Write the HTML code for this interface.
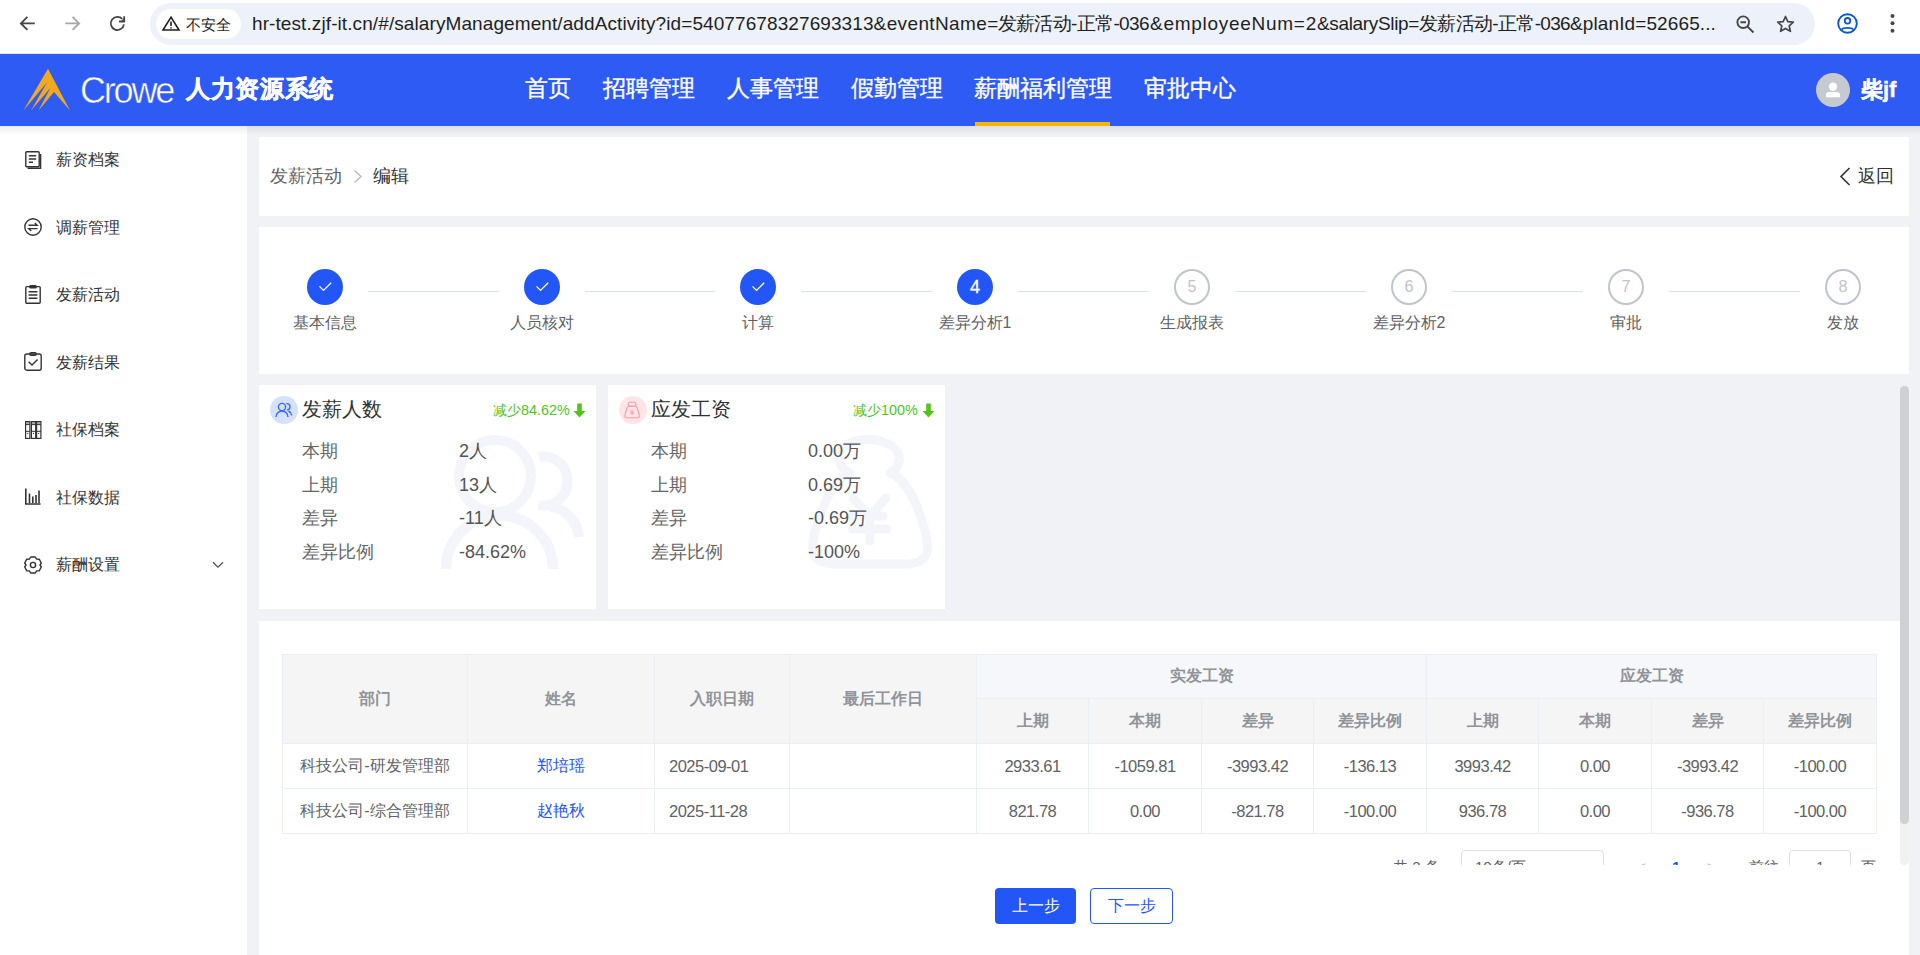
<!DOCTYPE html><html><head><meta charset="utf-8"><style>
*{margin:0;padding:0;box-sizing:border-box}
html,body{width:1920px;height:955px;overflow:hidden;background:#f0f2f5;font-family:"Liberation Sans",sans-serif;position:relative}
.a{position:absolute}
.t{position:absolute;white-space:nowrap;line-height:1}
svg{position:absolute;overflow:visible}
.card{position:absolute;background:#fff}
.nav{color:#fff;font-size:23px;-webkit-text-stroke:0.35px #fff}
.mi{font-size:16px;color:#333}
.step{position:absolute;width:36px;height:36px;border-radius:50%;top:269px}
.done{background:#2356f6}
.todo{border:2px solid #c0c4cc;background:#fff}
.snum{position:absolute;left:0;top:0;width:100%;text-align:center;line-height:32px;font-size:16px;color:#c0c4cc}
.line{position:absolute;top:291px;height:1px;background:#dcdfe6;width:131px}
.slabel{font-size:16px;color:#606266}
.sl{font-size:18px;color:#666}
.sv{font-size:18px;color:#555}
table{position:absolute;border-collapse:collapse;table-layout:fixed;left:282px;top:654px}
td,th{border:1px solid #ebeef5;text-align:center;font-size:16.5px;letter-spacing:-0.5px;color:#606266;font-weight:normal;padding:0;white-space:nowrap}
th{background:#f5f5f5;color:#909399;font-weight:bold;font-size:16px;letter-spacing:0}
td.c{font-size:16px;letter-spacing:0}
th.g{background:#f5f7fa}
a{color:#2356f6;text-decoration:none}
.pg{font-size:14px;color:#606266}
</style></head><body>
<div class="a" style="left:0;top:0;width:1920px;height:54px;background:#fff"></div>
<div class="a" style="left:0;top:53px;width:1920px;height:1px;background:#dfe1e5"></div>
<svg style="left:19px;top:16px" width="16" height="15" viewBox="0 0 16 15"><path d="M15.8 7.4H2M8.4 0.9L1.9 7.4L8.4 13.9" fill="none" stroke="#474747" stroke-width="1.9"/></svg>
<svg style="left:65px;top:16px" width="16" height="15" viewBox="0 0 16 15"><path d="M0.2 7.4H14M7.6 0.9L14.1 7.4L7.6 13.9" fill="none" stroke="#a8a8a8" stroke-width="1.9"/></svg>
<svg style="left:108px;top:14px" width="20" height="20" viewBox="0 0 20 20"><path d="M15.94 10.32A6.6 6.6 0 1 1 14.23 4.9" fill="none" stroke="#474747" stroke-width="1.8"/><path d="M16.2 2.2V7.5H11" fill="none" stroke="#474747" stroke-width="1.8"/><path d="M16.2 4L16.2 7.5L12.7 7.5Z" fill="#474747"/></svg>
<div class="a" style="left:150px;top:3px;width:1665px;height:42px;border-radius:21px;background:#edf1fa"></div>
<div class="a" style="left:156px;top:9px;width:85px;height:30px;border-radius:15px;background:#fff"></div>
<svg style="left:162px;top:16px" width="18" height="15" viewBox="0 0 18 15"><path d="M9 1.2L17 14H1Z" fill="none" stroke="#1f1f1f" stroke-width="1.6" stroke-linejoin="miter"/><path d="M9 5.5V10M9 11.2V12.6" stroke="#1f1f1f" stroke-width="1.6"/></svg>
<div class="t" style="left:186px;top:17px;font-size:15px;color:#1f1f1f">不安全</div>
<div class="t" style="left:252.0px;top:14px;font-size:19px;color:#1f1f1f;letter-spacing:0.092px">hr-test.zjf-it.cn/#/salaryManagement/addActivity?id=54077678327693313</div>
<div class="t" style="left:873.6px;top:14px;font-size:19px;color:#1f1f1f;letter-spacing:0.370px">&amp;eventName=</div>
<div class="t" style="left:997.5px;top:14px;font-size:19px;color:#1f1f1f;letter-spacing:-0.630px">发薪活动-正常-036</div>
<div class="t" style="left:1150.0px;top:14px;font-size:19px;color:#1f1f1f;letter-spacing:0.725px">&amp;employeeNum=2</div>
<div class="t" style="left:1317.0px;top:14px;font-size:19px;color:#1f1f1f;letter-spacing:-0.345px">&amp;salarySlip=</div>
<div class="t" style="left:1419.0px;top:14px;font-size:19px;color:#1f1f1f;letter-spacing:-0.669px">发薪活动-正常-036</div>
<div class="t" style="left:1570.0px;top:14px;font-size:19px;color:#1f1f1f;letter-spacing:0.111px">&amp;planId=52665...</div>
<svg style="left:1736px;top:15px" width="19" height="19" viewBox="0 0 19 19"><circle cx="7.2" cy="7.2" r="5.8" fill="none" stroke="#474747" stroke-width="1.9"/><path d="M4.4 7.2H10M11.3 11.3L17.5 17.5" stroke="#474747" stroke-width="1.9"/></svg>
<svg style="left:1776px;top:15px" width="19" height="18" viewBox="0 0 19 18"><path d="M9.5 1.5L11.8 6.6L17.3 7.1L13.2 10.8L14.4 16.3L9.5 13.4L4.6 16.3L5.8 10.8L1.7 7.1L7.2 6.6Z" fill="none" stroke="#474747" stroke-width="1.7" stroke-linejoin="round"/></svg>
<svg style="left:1837px;top:13px" width="21" height="21" viewBox="0 0 21 21"><circle cx="10.5" cy="10.5" r="9.3" fill="none" stroke="#0b57d0" stroke-width="1.9"/><circle cx="10.5" cy="7.8" r="2.8" fill="none" stroke="#0b57d0" stroke-width="1.8"/><path d="M4.6 16.8C6.2 14.3 14.8 14.3 16.4 16.8" fill="none" stroke="#0b57d0" stroke-width="1.8"/></svg>
<svg style="left:1889px;top:13px" width="7" height="21" viewBox="0 0 7 21"><circle cx="3.5" cy="2.9" r="2" fill="#474747"/><circle cx="3.5" cy="10.3" r="2" fill="#474747"/><circle cx="3.5" cy="17.7" r="2" fill="#474747"/></svg>
<div class="a" style="left:0;top:54px;width:1920px;height:72px;background:#2f5bf5"></div>
<svg style="left:0;top:0" width="80" height="120" viewBox="0 0 80 120"><path d="M48 68.8L70 110.5L54 92L38.5 110.5L50.4 88L31 110.5L47 82.6L23.4 110.5Z" fill="#f2a91d"/></svg>
<div class="t" id="crowe" style="left:80px;top:73px;font-size:36px;color:#fff;letter-spacing:-2.2px;-webkit-text-stroke:0.5px #2f5bf5">Crowe</div>
<div class="t" id="sysname" style="left:186px;top:77px;font-size:24px;color:#fff;font-weight:bold;-webkit-text-stroke:0.5px #fff;letter-spacing:0.7px">人力资源系统</div>
<div class="t nav" style="left:525px;top:77px">首页</div>
<div class="t nav" style="left:603px;top:77px">招聘管理</div>
<div class="t nav" style="left:727px;top:77px">人事管理</div>
<div class="t nav" style="left:851px;top:77px">假勤管理</div>
<div class="t nav" style="left:974px;top:77px">薪酬福利管理</div>
<div class="t nav" style="left:1144px;top:77px">审批中心</div>
<div class="a" style="left:975px;top:122px;width:135px;height:4px;background:#f8b500"></div>
<div class="a" style="left:1816px;top:73px;width:34px;height:34px;border-radius:50%;background:#c6c9cf"></div>
<svg style="left:1816px;top:73px" width="34" height="34" viewBox="0 0 34 34"><circle cx="17" cy="13.8" r="4.2" fill="#fff"/><path d="M10 24.2V21.6C10 19.8 11.5 18.9 13 18.9H21C22.5 18.9 24 19.8 24 21.6V24.2Z" fill="#fff"/></svg>
<div class="t" style="left:1861px;top:79px;font-size:22px;color:#fff;font-weight:bold;-webkit-text-stroke:0.4px #fff">柴jf</div>
<div class="a" style="left:0;top:126px;width:247px;height:829px;background:#fff"></div>
<div class="a" style="left:0;top:126px;width:1920px;height:9px;background:linear-gradient(rgba(0,0,0,0.075),rgba(0,0,0,0))"></div>
<div class="t mi" style="left:56px;top:152px">薪资档案</div>
<div class="t mi" style="left:56px;top:220px">调薪管理</div>
<div class="t mi" style="left:56px;top:287px">发薪活动</div>
<div class="t mi" style="left:56px;top:355px">发薪结果</div>
<div class="t mi" style="left:56px;top:422px">社保档案</div>
<div class="t mi" style="left:56px;top:490px">社保数据</div>
<div class="t mi" style="left:56px;top:557px">薪酬设置</div>
<svg style="left:25px;top:151px" width="17" height="18" viewBox="0 0 17 18"><rect x="0.8" y="0.8" width="13.4" height="15" rx="1" stroke="#333" fill="none" stroke-width="1.4"/><path d="M3.8 4.8H11.2M3.8 8H11.2M3.8 11.2H8" stroke="#333" fill="none" stroke-width="1.4"/><path d="M15.6 3V17.2H2.6" stroke="#333" fill="none" stroke-width="1.4"/></svg>
<svg style="left:24px;top:218px" width="18" height="18" viewBox="0 0 18 18"><circle cx="9" cy="9" r="8.2" stroke="#333" fill="none" stroke-width="1.4"/><path d="M4.5 7.3H13.2L10.8 5M13.5 10.6H4.8L7.2 12.9" stroke="#333" fill="none" stroke-width="1.4"/></svg>
<svg style="left:25px;top:285px" width="16" height="19" viewBox="0 0 16 19"><rect x="0.8" y="1.6" width="14.4" height="16.6" rx="1" stroke="#333" fill="none" stroke-width="1.4"/><rect x="4.8" y="0.7" width="6.4" height="2" rx="0.8" stroke="#333" fill="none" stroke-width="1.4"/><path d="M3.6 6.8H12.4M3.6 10H12.4M3.6 13.2H12.4" stroke="#333" fill="none" stroke-width="1.4"/></svg>
<svg style="left:24px;top:352px" width="18" height="19" viewBox="0 0 18 19"><rect x="0.8" y="2" width="16.4" height="16.2" rx="2" stroke="#333" fill="none" stroke-width="1.4"/><rect x="5.8" y="0.7" width="6.4" height="2.6" rx="1.2" stroke="#333" fill="none" stroke-width="1.4"/><path d="M4.6 9.8L8 13L13.6 7.4" stroke="#333" fill="none" stroke-width="1.4"/></svg>
<svg style="left:25px;top:421px" width="17" height="18" viewBox="0 0 17 18"><rect x="10.6" y="0.6" width="1.1" height="16.8" fill="#777"/><rect x="1.1" y="1.1" width="3.3" height="2.3" fill="#aaa"/><rect x="6.9" y="1.1" width="3.3" height="2.3" fill="#aaa"/><rect x="12.1" y="1.1" width="3.3" height="2.3" fill="#aaa"/><rect x="0.6" y="0.6" width="4.3" height="16.8" fill="none" stroke="#333" stroke-width="1.2"/><rect x="6.4" y="0.6" width="4.3" height="16.8" fill="none" stroke="#333" stroke-width="1.2"/><rect x="11.6" y="0.6" width="4.3" height="16.8" fill="none" stroke="#333" stroke-width="1.2"/><path d="M0.6 3.6H4.9M6.4 3.6H10.7M11.6 3.6H15.9M0.6 10.3H4.9M6.4 10.3H10.7M11.6 10.3H15.9" stroke="#333" stroke-width="1"/><circle cx="2.75" cy="12.4" r="0.6" fill="#333"/><circle cx="8.55" cy="12.4" r="0.6" fill="#333"/><circle cx="13.75" cy="12.4" r="0.6" fill="#333"/></svg>
<svg style="left:25px;top:488px" width="16" height="17" viewBox="0 0 16 17"><path d="M0.8 0.5V16H15.6" stroke="#333" stroke-width="1.6" fill="none"/><path d="M4.5 15V5.5M7.8 15V8.5M11 15V7M14 15V2.5" stroke="#333" stroke-width="1.6" fill="none"/></svg>
<svg style="left:24px;top:556px" width="18" height="18" viewBox="0 0 18 18"><path d="M6.7 1H11.3L12.6 3.1L15.2 3.2L17.3 7L16 9L17.3 11L15.2 14.8L12.6 14.9L11.3 17H6.7L5.4 14.9L2.8 14.8L0.7 11L2 9L0.7 7L2.8 3.2L5.4 3.1Z" stroke="#333" fill="none" stroke-width="1.4" stroke-linejoin="round"/><circle cx="9" cy="9" r="2.6" stroke="#333" fill="none" stroke-width="1.4"/></svg>
<svg style="left:212px;top:561px" width="12" height="8" viewBox="0 0 12 8"><path d="M1 1.2L6 6.2L11 1.2" stroke="#555" stroke-width="1.3" fill="none"/></svg>
<div class="card" style="left:259px;top:137px;width:1650px;height:79px"></div>
<div class="t" style="left:270px;top:167px;font-size:18px;color:#606266">发薪活动</div>
<svg style="left:353px;top:169px" width="10" height="15" viewBox="0 0 10 15"><path d="M1.5 1.5L8 7.5L1.5 13.5" stroke="#b5b8bf" stroke-width="1.3" fill="none"/></svg>
<div class="t" style="left:373px;top:167px;font-size:18px;color:#303133">编辑</div>
<svg style="left:1839px;top:167px" width="12" height="19" viewBox="0 0 12 19"><path d="M10.5 1L2 9.5L10.5 18" stroke="#303133" stroke-width="1.6" fill="none"/></svg>
<div class="t" style="left:1858px;top:167px;font-size:18px;color:#303133">返回</div>
<div class="card" style="left:259px;top:227px;width:1650px;height:147px"></div>
<div class="line" style="left:368px;width:131px"></div>
<div class="line" style="left:585px;width:130px"></div>
<div class="line" style="left:801px;width:131px"></div>
<div class="line" style="left:1018px;width:131px"></div>
<div class="line" style="left:1235px;width:131px"></div>
<div class="line" style="left:1452px;width:131px"></div>
<div class="line" style="left:1669px;width:131px"></div>
<div class="step done" style="left:307px"></div>
<svg style="left:318px;top:282px" width="14" height="10" viewBox="0 0 14 10"><path d="M1.5 4.4L5.5 8.4L13.2 0.8" stroke="#fff" stroke-width="1.3" fill="none"/></svg>
<div class="t slabel" style="left:265px;top:315px;width:120px;text-align:center">基本信息</div>
<div class="step done" style="left:524px"></div>
<svg style="left:535px;top:282px" width="14" height="10" viewBox="0 0 14 10"><path d="M1.5 4.4L5.5 8.4L13.2 0.8" stroke="#fff" stroke-width="1.3" fill="none"/></svg>
<div class="t slabel" style="left:482px;top:315px;width:120px;text-align:center">人员核对</div>
<div class="step done" style="left:740px"></div>
<svg style="left:751px;top:282px" width="14" height="10" viewBox="0 0 14 10"><path d="M1.5 4.4L5.5 8.4L13.2 0.8" stroke="#fff" stroke-width="1.3" fill="none"/></svg>
<div class="t slabel" style="left:698px;top:315px;width:120px;text-align:center">计算</div>
<div class="step done" style="left:957px"></div>
<div class="t" style="left:957px;top:278px;width:36px;text-align:center;font-size:18px;color:#fff;-webkit-text-stroke:0.3px #fff">4</div>
<div class="t slabel" style="left:915px;top:315px;width:120px;text-align:center">差异分析1</div>
<div class="step todo" style="left:1174px"><div class="snum">5</div></div>
<div class="t slabel" style="left:1132px;top:315px;width:120px;text-align:center">生成报表</div>
<div class="step todo" style="left:1391px"><div class="snum">6</div></div>
<div class="t slabel" style="left:1349px;top:315px;width:120px;text-align:center">差异分析2</div>
<div class="step todo" style="left:1608px"><div class="snum">7</div></div>
<div class="t slabel" style="left:1566px;top:315px;width:120px;text-align:center">审批</div>
<div class="step todo" style="left:1825px"><div class="snum">8</div></div>
<div class="t slabel" style="left:1783px;top:315px;width:120px;text-align:center">发放</div>
<div class="card" style="left:259px;top:385px;width:337px;height:224px"></div>
<svg style="left:440px;top:430px" width="150" height="145" viewBox="0 0 150 145"><circle cx="55" cy="46" r="36" fill="none" stroke="#f3f5fb" stroke-width="10"/><path d="M6 139A53.5 53.5 0 0 1 113 139" fill="none" stroke="#f3f5fb" stroke-width="10.5"/><path d="M98.7 26.9A24.5 24.5 0 1 1 98.7 75.1" fill="none" stroke="#f3f5fb" stroke-width="10"/><path d="M110.9 76.5A34 34 0 0 1 139 107" fill="none" stroke="#f3f5fb" stroke-width="10"/></svg>
<div class="a" style="left:270px;top:396px;width:28px;height:28px;border-radius:50%;background:#d5e1ff"></div>
<svg style="left:275px;top:401px" width="18" height="18" viewBox="0 0 18 18"><circle cx="7" cy="6" r="3.6" fill="none" stroke="#2f6bff" stroke-width="1.4"/><path d="M1 16A6 6 0 0 1 13 16" fill="none" stroke="#2f6bff" stroke-width="1.4"/><path d="M11.5 2.6A3.2 3.2 0 0 1 12 9" fill="none" stroke="#2f6bff" stroke-width="1.4"/><path d="M13.5 10C15.5 11 16.5 12.8 16.8 14.5" fill="none" stroke="#2f6bff" stroke-width="1.4"/></svg>
<div class="t" style="left:302px;top:399px;font-size:20px;color:#303133">发薪人数</div>
<div class="t" style="left:493px;top:403px;font-size:14.4px;color:#52c41a">减少84.62%</div>
<svg style="left:573px;top:403px" width="13" height="15" viewBox="0 0 13 15"><path d="M4.2 0.5H8.8V8H12.5L6.5 14.5L0.5 8H4.2Z" fill="#52c41a"/></svg>
<div class="t sl" style="left:302px;top:442px">本期</div>
<div class="t sv" style="left:459px;top:442px">2人</div>
<div class="t sl" style="left:302px;top:476px">上期</div>
<div class="t sv" style="left:459px;top:476px">13人</div>
<div class="t sl" style="left:302px;top:509px">差异</div>
<div class="t sv" style="left:459px;top:509px">-11人</div>
<div class="t sl" style="left:302px;top:543px">差异比例</div>
<div class="t sv" style="left:459px;top:543px">-84.62%</div>
<div class="card" style="left:608px;top:385px;width:337px;height:224px"></div>
<svg style="left:805px;top:435px" width="130" height="140" viewBox="0 0 130 140"><path d="M45 38C30 30 28 12 50 6C62 3 72 4 80 8C96 12 100 30 85 38C102 44 114 72 121 100C126 122 118 129 100 129H30C12 129 4 122 9 100C16 72 28 44 45 38Z" fill="none" stroke="#f3f5fb" stroke-width="9" stroke-linejoin="round"/><path d="M48.5 64L64.8 81L81 63M64.8 81V106M47 81H78M47 94H82" fill="none" stroke="#f3f5fb" stroke-width="9" stroke-linecap="round" stroke-linejoin="round"/></svg>
<div class="a" style="left:619px;top:396px;width:28px;height:28px;border-radius:50%;background:#ffe4e8"></div>
<svg style="left:623px;top:401px" width="18" height="18" viewBox="0 0 18 18"><rect x="5.2" y="1.3" width="7.8" height="3.9" rx="1.9" fill="none" stroke="#ff9aa8" stroke-width="1.1"/><path d="M6 5.2H12.2C13.2 5.2 13.8 5.7 14.1 6.5L16.3 14C16.7 15.8 15.9 16.8 14.3 16.8H3.9C2.3 16.8 1.5 15.8 1.9 14L4.1 6.5C4.4 5.7 5 5.2 6 5.2Z" fill="none" stroke="#ff9aa8" stroke-width="1.1"/><path d="M7.4 8.6L9.1 10.6L10.8 8.6M9.1 10.6V13.8M7.3 11H10.9M7.3 12.5H10.9" fill="none" stroke="#ff9aa8" stroke-width="0.9"/></svg>
<div class="t" style="left:651px;top:399px;font-size:20px;color:#303133">应发工资</div>
<div class="t" style="left:853px;top:403px;font-size:14.4px;color:#52c41a">减少100%</div>
<svg style="left:922px;top:403px" width="13" height="15" viewBox="0 0 13 15"><path d="M4.2 0.5H8.8V8H12.5L6.5 14.5L0.5 8H4.2Z" fill="#52c41a"/></svg>
<div class="t sl" style="left:651px;top:442px">本期</div>
<div class="t sv" style="left:808px;top:442px">0.00万</div>
<div class="t sl" style="left:651px;top:476px">上期</div>
<div class="t sv" style="left:808px;top:476px">0.69万</div>
<div class="t sl" style="left:651px;top:509px">差异</div>
<div class="t sv" style="left:808px;top:509px">-0.69万</div>
<div class="t sl" style="left:651px;top:543px">差异比例</div>
<div class="t sv" style="left:808px;top:543px">-100%</div>
<div class="card" style="left:259px;top:621px;width:1650px;height:334px"></div>
<table><colgroup><col style="width:185px"><col style="width:187px"><col style="width:135px"><col style="width:187px"><col style="width:112px"><col style="width:113px"><col style="width:112px"><col style="width:113px"><col style="width:112px"><col style="width:113px"><col style="width:112px"><col style="width:113px"></colgroup><tr style="height:44px"><th rowspan="2" style="height:89px">部门</th><th rowspan="2">姓名</th><th rowspan="2">入职日期</th><th rowspan="2">最后工作日</th><th colspan="4" class="g">实发工资</th><th colspan="4" class="g">应发工资</th></tr><tr style="height:45px"><th>上期</th><th>本期</th><th>差异</th><th>差异比例</th><th>上期</th><th>本期</th><th>差异</th><th>差异比例</th></tr><tr style="height:45px"><td class="c">科技公司-研发管理部</td><td class="c"><a>郑培瑶</a></td><td style="text-align:left;padding-left:14px">2025-09-01</td><td></td><td>2933.61</td><td>-1059.81</td><td>-3993.42</td><td>-136.13</td><td>3993.42</td><td>0.00</td><td>-3993.42</td><td>-100.00</td></tr><tr style="height:45px"><td class="c">科技公司-综合管理部</td><td class="c"><a>赵艳秋</a></td><td style="text-align:left;padding-left:14px">2025-11-28</td><td></td><td>821.78</td><td>0.00</td><td>-821.78</td><td>-100.00</td><td>936.78</td><td>0.00</td><td>-936.78</td><td>-100.00</td></tr></table>
<div class="a" style="left:1300px;top:845px;width:600px;height:20px;overflow:hidden">
<div class="t pg" style="left:93px;top:14px;font-size:15px">共 2 条</div>
<div class="a" style="left:161px;top:5px;width:143px;height:32px;border:1px solid #dcdfe6;border-radius:4px"></div>
<div class="t pg" style="left:175px;top:14px;font-size:15px">10条/页</div>
<div class="t pg" style="left:337px;top:14px;font-size:15px;color:#c0c4cc">&lt;</div>
<div class="t pg" style="left:372px;top:14px;font-size:15px;color:#2356f6;font-weight:bold">1</div>
<div class="t pg" style="left:407px;top:14px;font-size:15px;color:#c0c4cc">&gt;</div>
<div class="t pg" style="left:449px;top:14px;font-size:15px">前往</div>
<div class="a" style="left:489px;top:5px;width:62px;height:32px;border:1px solid #dcdfe6;border-radius:4px"></div>
<div class="t pg" style="left:516px;top:14px;font-size:15px">1</div>
<div class="t pg" style="left:561px;top:14px;font-size:15px">页</div>
</div>
<div class="a" style="left:1900px;top:385px;width:9px;height:480px;border-radius:4.5px;background:#f1f1f1"></div>
<div class="a" style="left:1900px;top:386px;width:9px;height:438px;border-radius:4.5px;background:#cfd0d2"></div>
<div class="a" style="left:995px;top:888px;width:81px;height:36px;border-radius:4px;background:#2356f6"></div>
<div class="t" style="left:995px;top:898px;width:81px;text-align:center;font-size:16px;color:#fff">上一步</div>
<div class="a" style="left:1090px;top:888px;width:83px;height:36px;border-radius:4px;border:1px solid #2356f6;background:#fff"></div>
<div class="t" style="left:1090px;top:898px;width:83px;text-align:center;font-size:16px;color:#2356f6">下一步</div>
</body></html>
